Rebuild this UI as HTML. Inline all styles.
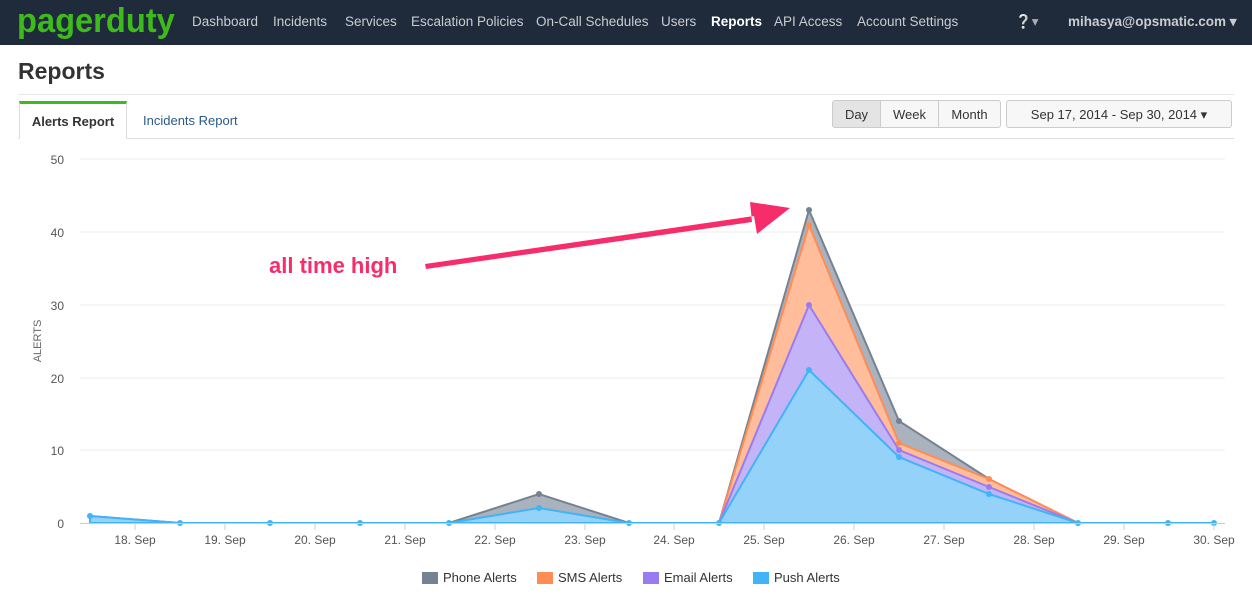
<!DOCTYPE html>
<html><head><meta charset="utf-8"><style>
body{margin:0;width:1252px;height:594px;overflow:hidden;background:#fff;font-family:"Liberation Sans",sans-serif;position:relative}
.nav{position:absolute;left:0;top:0;width:1252px;height:45px;background:#1f2a3a}
.logo{position:absolute;left:17px;top:2px;color:#3dbb1c;font-size:34px;font-weight:bold;letter-spacing:0px;transform:scaleX(0.96);transform-origin:left}
.nav a{position:absolute;top:14px;color:#c8ccd2;font-size:13.5px}
h1{position:absolute;left:18px;top:58px;margin:0;font-size:23px;color:#333}
.hr{position:absolute;left:18px;right:18px;top:94px;border-top:1px solid #e6e6e6}
.tabline{position:absolute;left:18px;right:18px;top:138px;border-top:1px solid #ddd}
.tab{position:absolute;left:19px;top:101px;width:108px;height:38px;border:1px solid #ddd;border-bottom:1px solid #fff;border-top:3px solid #3dbb1c;background:#fff;box-sizing:border-box;font-size:13px;font-weight:bold;color:#333;text-align:center;line-height:36px}
.btn{position:absolute;top:100px;height:28px;border:1px solid #ccc;background:#f7f7f7;font-size:13px;color:#333;line-height:27px;text-align:center;box-sizing:border-box;border-radius:3px}
</style></head><body>
<div class="nav">
<div class="logo">pagerduty</div>
<a style="left:192px">Dashboard</a><a style="left:273px">Incidents</a><a style="left:345px">Services</a><a style="left:411px">Escalation Policies</a><a style="left:536px">On-Call Schedules</a><a style="left:661px">Users</a><a style="left:711px;color:#fff;font-weight:bold">Reports</a><a style="left:774px">API Access</a><a style="left:857px">Account Settings</a>
<a style="left:1015px;color:#aab">&#10068;&#9662;</a><a style="left:1068px;font-weight:bold">mihasya@opsmatic.com &#9662;</a>
</div>
<h1>Reports</h1>
<div class="hr"></div>
<div class="tabline"></div>
<div class="tab">Alerts Report</div>
<div style="position:absolute;left:143px;top:113px;font-size:13px;color:#2a5a8a">Incidents Report</div>
<div class="btn" style="left:832px;width:49px;background:#e4e4e4;border-radius:3px 0 0 3px">Day</div>
<div class="btn" style="left:880px;width:59px;border-radius:0">Week</div>
<div class="btn" style="left:938px;width:63px;border-radius:0 3px 3px 0">Month</div>
<div class="btn" style="left:1006px;width:226px">Sep 17, 2014 - Sep 30, 2014 &#9662;</div>
<svg width="1252" height="594" style="position:absolute;left:0;top:0" font-family="Liberation Sans, sans-serif">
<g stroke="#eee"><line x1="80" x2="1225" y1="159" y2="159"/><line x1="80" x2="1225" y1="232" y2="232"/><line x1="80" x2="1225" y1="305" y2="305"/><line x1="80" x2="1225" y1="378" y2="378"/><line x1="80" x2="1225" y1="450" y2="450"/></g>
<g font-size="12" fill="#555" text-anchor="end"><text x="64" y="164">50</text><text x="64" y="237">40</text><text x="64" y="310">30</text><text x="64" y="383">20</text><text x="64" y="455">10</text><text x="64" y="528">0</text></g>
<text x="41" y="341" font-size="11" fill="#666" transform="rotate(-90 41 341)" text-anchor="middle">ALERTS</text>
<polygon fill="#aab3bd" stroke="#758292" stroke-width="2" points="90,516 180,523 270,523 360,523 449,523 539,494 629,523 719,523 809,210 899,421 989,479 1078,523 1168,523 1214,523 1214,523 90,523"/>
<polygon fill="#ffbd9b" stroke="#ff8c55" stroke-width="2" points="719,523 809,225 899,443 989,479 1078,523"/>
<polygon fill="#c5b3f7" stroke="#9a7cf2" stroke-width="2" points="719,523 809,305 899,450 989,487 1078,523"/>
<polygon fill="#94d2f9" stroke="#41b3f7" stroke-width="2" points="90,516 180,523 270,523 360,523 449,523 539,508 629,523 719,523 809,370 899,457 989,494 1078,523 1168,523 1214,523 90,523"/>
<g fill="#41b3f7"><circle cx="90" cy="516" r="3"/><circle cx="180" cy="523" r="3"/><circle cx="270" cy="523" r="3"/><circle cx="360" cy="523" r="3"/><circle cx="449" cy="523" r="3"/><circle cx="539" cy="508" r="3"/><circle cx="629" cy="523" r="3"/><circle cx="719" cy="523" r="3"/><circle cx="809" cy="370" r="3"/><circle cx="899" cy="457" r="3"/><circle cx="989" cy="494" r="3"/><circle cx="1078" cy="523" r="3"/><circle cx="1168" cy="523" r="3"/><circle cx="1214" cy="523" r="3"/></g>
<g fill="#758292"><circle cx="809" cy="210" r="3"/><circle cx="899" cy="421" r="3"/><circle cx="539" cy="494" r="3"/></g>
<g fill="#ff8c55"><circle cx="809" cy="225" r="3"/><circle cx="899" cy="443" r="3"/><circle cx="989" cy="479" r="3"/></g>
<g fill="#9a7cf2"><circle cx="809" cy="305" r="3"/><circle cx="899" cy="450" r="3"/><circle cx="989" cy="487" r="3"/></g>
<line x1="80" x2="1225" y1="523.5" y2="523.5" stroke="#c0d0e0"/>
<g stroke="#c0d0e0">
<line x1="135" x2="135" y1="524" y2="530"/><line x1="225" x2="225" y1="524" y2="530"/><line x1="315" x2="315" y1="524" y2="530"/><line x1="405" x2="405" y1="524" y2="530"/><line x1="495" x2="495" y1="524" y2="530"/><line x1="585" x2="585" y1="524" y2="530"/><line x1="674" x2="674" y1="524" y2="530"/><line x1="764" x2="764" y1="524" y2="530"/><line x1="854" x2="854" y1="524" y2="530"/><line x1="944" x2="944" y1="524" y2="530"/><line x1="1034" x2="1034" y1="524" y2="530"/><line x1="1124" x2="1124" y1="524" y2="530"/><line x1="1214" x2="1214" y1="524" y2="530"/></g>
<g font-size="12" fill="#555" text-anchor="middle"><text x="135" y="544">18. Sep</text><text x="225" y="544">19. Sep</text><text x="315" y="544">20. Sep</text><text x="405" y="544">21. Sep</text><text x="495" y="544">22. Sep</text><text x="585" y="544">23. Sep</text><text x="674" y="544">24. Sep</text><text x="764" y="544">25. Sep</text><text x="854" y="544">26. Sep</text><text x="944" y="544">27. Sep</text><text x="1034" y="544">28. Sep</text><text x="1124" y="544">29. Sep</text><text x="1214" y="544">30. Sep</text></g>
<g font-size="13" fill="#333">
<rect x="422" y="572" width="16" height="12" fill="#758292"/><text x="443" y="582">Phone Alerts</text>
<rect x="537" y="572" width="16" height="12" fill="#ff8c55"/><text x="558" y="582">SMS Alerts</text>
<rect x="643" y="572" width="16" height="12" fill="#9a7cf2"/><text x="664" y="582">Email Alerts</text>
<rect x="753" y="572" width="16" height="12" fill="#41b3f7"/><text x="774" y="582">Push Alerts</text></g>
<polygon fill="#f72d6b" points="425,264 754,216 757,234 790,208 750,202 752,222 426,269"/>
<text x="269" y="273" font-size="22" font-weight="bold" fill="#f72d6b" stroke="#fff" stroke-width="4" paint-order="stroke">all time high</text>
</svg>
</body></html>
